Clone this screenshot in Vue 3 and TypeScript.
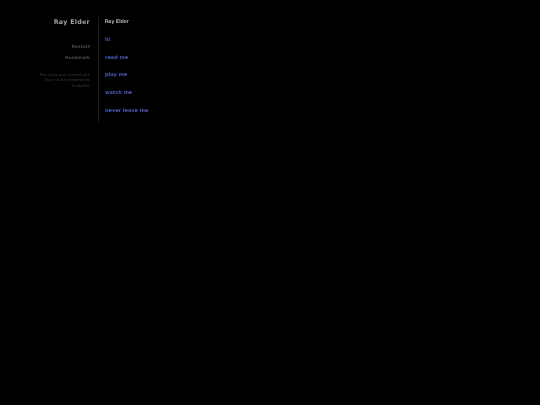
<script setup lang="ts">
const links: string[] = ['hi', 'read me', 'play me', 'watch me', 'never leave me']
</script>

<template>
  <div class="page">
    <aside class="side">
      <h1 class="title">Ray Elder</h1>
      <ul class="menu">
        <li>Restart</li>
        <li>Bookmark</li>
      </ul>
      <p class="credit">This story was created with Twine and is powered by TiddlyWiki</p>
    </aside>
    <main class="passage">
      <div class="name">Ray Elder</div>
      <a v-for="l in links" :key="l" class="link">{{ l }}</a>
    </main>
  </div>
</template>

<style>
html, body { margin: 0; background: #000; }
</style>

<style scoped>
.page {
  width: 540px;
  height: 405px;
  background: #000;
  display: flex;
  align-items: flex-start;
  font-family: "DejaVu Sans", sans-serif;
  overflow: hidden;
  filter: blur(0.25px);
}
.side {
  width: 90px;
  padding-top: 17px;
  text-align: right;
  flex: none;
}
.title {
  margin: 0;
  font-size: 6.4px;
  line-height: 10px;
  font-weight: bold;
  color: #a0a0a0;
  letter-spacing: 0.25px;
}
.menu {
  list-style: none;
  margin: 16px 0 0;
  padding: 0;
  font-size: 4.4px;
  font-weight: bold;
  line-height: 7px;
  color: #484848;
}
.menu li + li { margin-top: 4px; }
.credit {
  margin: 12px 0 0;
  font-size: 3.7px;
  line-height: 5.4px;
  color: #383838;
  padding-left: 36px;
}
.passage {
  margin: 17px 0 0 8px;
  padding: 0 0 8px 6px;
  border-left: 1px solid #1c1c1c;
  display: flex;
  flex-direction: column;
  align-items: flex-start;
  font-size: 5px;
  line-height: 8px;
}
.name { color: #f4f4f4; margin-bottom: 10px; }
.link {
  color: #4a5abc;
  font-weight: bold;
  margin-bottom: 9.7px;
}
.link:last-child { margin-bottom: 0; }
</style>
